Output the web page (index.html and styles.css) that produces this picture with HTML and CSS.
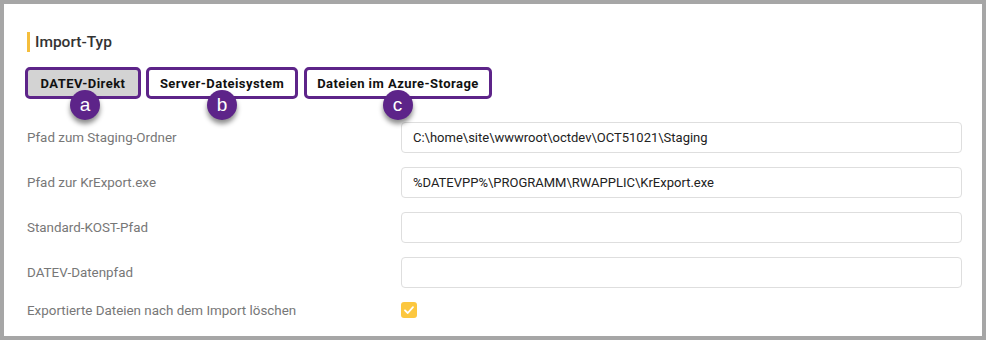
FILE: index.html
```html
<!DOCTYPE html>
<html lang="de">
<head>
<meta charset="utf-8">
<title>Import-Typ</title>
<link rel="stylesheet" href="styles.css">
</head>
<body>
<div class="frame">
  <div class="panel">
    <h2 class="section-title">Import-Typ</h2>
    <div class="btn-group">
      <div class="btn-wrap">
        <button class="btn active">DATEV-Direkt</button>
        <span class="badge">a</span>
      </div>
      <div class="btn-wrap">
        <button class="btn">Server-Dateisystem</button>
        <span class="badge">b</span>
      </div>
      <div class="btn-wrap">
        <button class="btn">Dateien im Azure-Storage</button>
        <span class="badge">c</span>
      </div>
    </div>
    <div class="form">
      <div class="row">
        <label class="label">Pfad zum Staging-Ordner</label>
        <div class="input">C:\home\site\wwwroot\octdev\OCT51021\Staging</div>
      </div>
      <div class="row">
        <label class="label">Pfad zur KrExport.exe</label>
        <div class="input">%DATEVPP%\PROGRAMM\RWAPPLIC\KrExport.exe</div>
      </div>
      <div class="row">
        <label class="label">Standard-KOST-Pfad</label>
        <div class="input"></div>
      </div>
      <div class="row">
        <label class="label">DATEV-Datenpfad</label>
        <div class="input"></div>
      </div>
      <div class="row row-check">
        <label class="label">Exportierte Dateien nach dem Import löschen</label>
        <span class="checkbox">
          <svg width="16" height="16" viewBox="0 0 16 16"><path d="M4 8.3 L6.8 11 L12 5.2" fill="none" stroke="#fff" stroke-width="1.8" stroke-linecap="round" stroke-linejoin="round"/></svg>
        </span>
      </div>
    </div>
  </div>
</div>
</body>
</html>
```

FILE: styles.css
```css
html, body {
  margin: 0;
  padding: 0;
}
body {
  width: 986px;
  height: 340px;
  background: #a6a6a6;
  font-family: Roboto, "Liberation Sans", Arial, sans-serif;
}
.frame {
  box-sizing: border-box;
  width: 986px;
  height: 340px;
  padding: 4px;
}
.panel {
  box-sizing: border-box;
  height: 332px;
  background: #fff;
  padding: 28px 20px 0 19px;
}
.section-title {
  margin: 0 0 15px 4px;
  font-size: 15.5px;
  font-weight: 500;
  line-height: 20px;
  color: #333;
  border-left: 3px solid #f5be3c;
  padding-left: 5px;
}
.btn-group {
  display: flex;
  gap: 5px;
  margin-left: 2px;
}
.btn-wrap {
  position: relative;
  display: flex;
}
.btn {
  box-sizing: border-box;
  height: 32px;
  border: 3px solid #5d2489;
  border-radius: 5px;
  background: #fff;
  font-family: Roboto, "Liberation Sans", Arial, sans-serif;
  font-size: 13px;
  font-weight: 700;
  letter-spacing: 0.45px;
  color: #111;
  padding: 0;
  white-space: nowrap;
  cursor: pointer;
}
.btn.active {
  background: #d3d3d3;
}
.btn-wrap:nth-child(1) .btn { width: 116px; }
.btn-wrap:nth-child(2) .btn { width: 152px; }
.btn-wrap:nth-child(3) .btn { width: 188px; margin-left: 1px; }
.badge {
  position: absolute;
  left: 50%;
  top: 23px;
  width: 30px;
  height: 30px;
  margin-left: -15px;
  border-radius: 50%;
  background: #5d2489;
  color: #fff;
  font-family: "Liberation Sans", Arial, sans-serif;
  font-size: 19px;
  line-height: 30px;
  text-align: center;
  box-shadow: 0 4px 5px rgba(0, 0, 0, 0.45);
}
.btn-wrap:nth-child(1) .badge { margin-left: -13px; }
.form {
  margin-top: 23px;
  display: flex;
  flex-direction: column;
  gap: 14px;
}
.row {
  display: flex;
  align-items: center;
  padding-left: 4px;
}
.label {
  width: 374px;
  flex: none;
  font-size: 13.4px;
  color: #777;
}
.input {
  box-sizing: border-box;
  flex: 1;
  height: 31px;
  border: 1px solid #dedede;
  border-radius: 4px;
  padding: 0 11px;
  font-size: 13px;
  line-height: 29px;
  color: #222;
}
.row-check {
  height: 16px;
}
.checkbox {
  width: 16px;
  height: 16px;
  border-radius: 3px;
  background: #fcc73f;
  display: block;
}
.checkbox svg {
  display: block;
}
```
